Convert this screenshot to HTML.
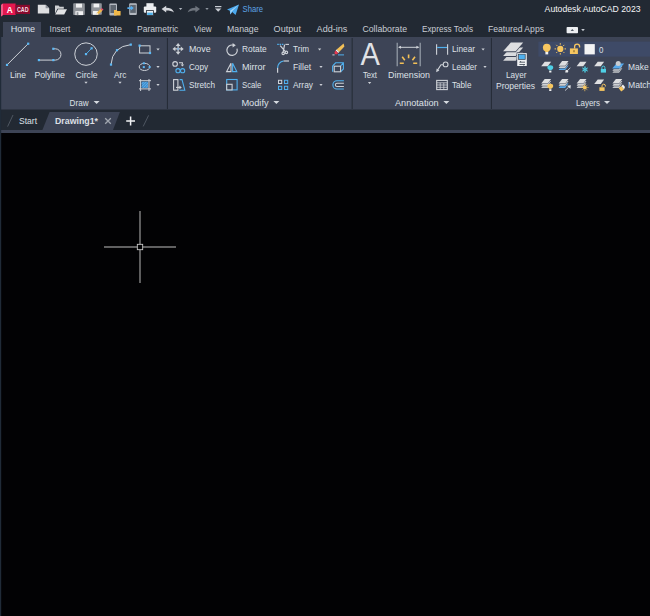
<!DOCTYPE html>
<html><head><meta charset="utf-8"><title>Autodesk AutoCAD 2023</title>
<style>
html,body{margin:0;padding:0;background:#000;overflow:hidden}
body{width:650px;height:616px;position:relative}
svg{position:absolute;left:0;top:0;display:block}
text{font-family:"Liberation Sans",sans-serif;font-size:9.5px;fill:#dde0e6}
.b{font-weight:bold}
</style></head><body>
<svg width="650" height="616" viewBox="0 0 650 616">
<!-- backgrounds -->
<rect x="0" y="0" width="650" height="616" fill="#020204"/>
<rect x="0" y="0" width="650" height="37" fill="#222933"/>
<rect x="0" y="100" width="650" height="30" fill="#222933"/>
<rect x="0" y="37" width="650" height="72.5" fill="#3d4456"/>
<rect x="0" y="130" width="650" height="3" fill="#3d4456"/>
<rect x="0" y="37" width="1.2" height="579" fill="#202b38"/>
<!-- home tab -->
<rect x="3" y="22" width="38" height="16" fill="#3d4456"/>
<!-- panel separators -->
<g fill="#252c37">
<rect x="166.9" y="38" width="1.05" height="71"/>
<rect x="351.5" y="38" width="1.4" height="71" fill="#2b323e"/>
<rect x="490.9" y="38" width="1.05" height="71"/>
</g>
<!-- drawing tab -->
<polygon points="49.6,112 119.9,112 113,130 42.4,130" fill="#3d4456"/>
<!-- layer combo -->
<rect x="538.4" y="41.6" width="112" height="15" fill="#3e4a67"/>
<!-- crosshair -->
<g stroke="#808080" stroke-width="1.45" fill="none">
<line x1="104" y1="247" x2="176" y2="247"/>
<line x1="140" y1="211" x2="140" y2="283"/>
</g>
<rect x="137.3" y="244.3" width="5.4" height="5.4" fill="#020204" stroke="#d0d0d0" stroke-width="0.85"/>
<!-- logo -->
<polygon points="1,5 3,3.6 15.6,3.6 15.6,15 3,15 1,16.4" fill="#e3174f"/>
<polygon points="1,5 3,3.6 3,15 1,16.4" fill="#ef5d86"/>
<rect x="15.6" y="4.8" width="14.4" height="9.2" fill="#870a2d"/>
<text x="6.8" y="12.7" textLength="6" lengthAdjust="spacingAndGlyphs" style="font-size:9px;font-weight:bold;fill:#fff">A</text>
<text x="17" y="12.1" textLength="11.6" lengthAdjust="spacingAndGlyphs" style="font-size:6.3px;font-weight:bold;fill:#f3dfe4">CAD</text>
<!-- QAT: new -->
<path d="M37.8,4.8 h7.8 l3.6,3.4 v5.4 h-11.4 z" fill="#dddee0"/>
<path d="M45.6,4.8 l3.6,3.4 h-3.6z" fill="#8e939b"/>
<!-- open -->
<path d="M55,5.4 h3.6 l1,1.4 h4.2 v2 h-6.4 l-2.4,5z" fill="#cfd1d4"/>
<path d="M58,9.2 h9 l-2.8,5.3 h-9z" fill="#e2e3e5"/>
<!-- save -->
<g>
<rect x="73.2" y="3.2" width="11.6" height="11.9" rx="0.8" fill="#90949a"/>
<rect x="76" y="3.7" width="6" height="3.9" fill="#f0f1f2"/>
<rect x="75.4" y="11.2" width="7.6" height="3.9" fill="#f0f1f2"/>
<rect x="76.6" y="12.2" width="1.8" height="2.9" fill="#90949a"/>
</g>
<!-- save as -->
<g>
<rect x="91.2" y="3.2" width="10.6" height="11.6" rx="0.8" fill="#90949a"/>
<rect x="93.6" y="3.7" width="5.6" height="3.7" fill="#f0f1f2"/>
<rect x="93" y="11" width="5" height="3.8" fill="#f0f1f2"/>
<path d="M96.2,15 l0.8,-2.4 l3.6,-3.6 l1.8,1.7 l-3.7,3.6z" fill="#f0b84a"/>
<path d="M100.6,9 l1.1,-1.1 l1.8,1.7 l-1.1,1.1z" fill="#e8506a"/>
<path d="M96.2,15 l0.8,-2.4 l1.7,1.7z" fill="#e9e9e9"/>
</g>
<!-- mobile open -->
<g>
<rect x="109.4" y="3.4" width="7.6" height="12" rx="1" fill="#b4b9c1"/>
<rect x="110.4" y="5" width="5.6" height="8" fill="#5e6670"/>
<path d="M114,10 h2.6 l0.8,1 h3.2 v4.4 h-6.6z" fill="#f0b84a"/>
</g>
<!-- mobile save -->
<g>
<rect x="129.2" y="3.3" width="7.6" height="11.8" rx="1" fill="#b4b9c1"/>
<rect x="130.2" y="4.9" width="5.6" height="8" fill="#5e6670"/>
<path d="M127.4,7.3 h3.4 v-1.6 l3,2.4 l-3,2.4 v-1.6 h-3.4z" fill="#55aef0"/>
</g>
<!-- print -->
<g>
<rect x="146.4" y="3.2" width="7.2" height="4" fill="#eceef1"/>
<rect x="143.8" y="6.6" width="12.4" height="6.2" rx="1" fill="#eceef1"/>
<rect x="146.4" y="10.6" width="7.2" height="5" fill="#eceef1" stroke="#222933" stroke-width="0.8"/>
<rect x="147.2" y="12.6" width="5.6" height="2.4" fill="#4fb0e8"/>
</g>
<!-- undo -->
<path d="M161.6,9 l4.6,-3.2 v2 c4,0 6.6,1.4 7.8,4.6 c-2,-1.6 -4.4,-2 -7.8,-2 v2z" fill="#d4d7dc"/>
<!-- redo -->
<path d="M200,9 l-4.6,-3.2 v2 c-4,0 -6.6,1.4 -7.8,4.6 c2,-1.6 4.4,-2 7.8,-2 v2z" fill="#6e747d"/>
<!-- customize -->
<rect x="215" y="6" width="6.4" height="1.2" fill="#c9cdd4"/>
<polygon points="215,8.4 221.4,8.4 218.2,11.8" fill="#c9cdd4"/>
<!-- share plane -->
<path d="M227,9.4 l12,-5 l-3.4,10.6 l-3.4,-3 l-2,2.4 l-0.4,-3.6z" fill="#4aa8ee"/>
<path d="M239,4.4 l-8.8,6.4 l0.4,3.6 l1.2,-3z" fill="#a6d6f8"/>
<!-- workspace switch -->
<rect x="566.6" y="27" width="11.4" height="6.2" rx="0.8" fill="#eceef1"/>
<polygon points="570.6,31 574,31 572.3,29" fill="#555d68"/>
<g fill="none" stroke="#ced2d8" stroke-width="1">
<line x1="7" y1="64.9" x2="28.2" y2="43.7"/>
<path d="M38.8,60.1 H55.3 A5.65,5.65 0 0 0 55.3,48.8 H53.3"/>
<circle cx="86" cy="54.1" r="11.25"/>
<path d="M111,64.6 Q112.2,46.6 131,44.6"/>
<rect x="139.6" y="45.8" width="10.4" height="7.2"/>
<ellipse cx="144.5" cy="66.9" rx="5.3" ry="3.6"/>
<path d="M140.6,79 V91 M149,79 V91 M139,80.7 H151 M139,88.9 H151"/>
</g>
<line x1="86" y1="54.1" x2="91.6" y2="48.3" stroke="#4fb0ee" stroke-width="0.9"/>
<rect x="5.90" y="63.80" width="2.2" height="2.2" fill="#5cb9f6"/>
<rect x="27.10" y="42.60" width="2.2" height="2.2" fill="#5cb9f6"/>
<rect x="37.80" y="59.00" width="2.2" height="2.2" fill="#5cb9f6"/>
<rect x="52.20" y="59.00" width="2.2" height="2.2" fill="#5cb9f6"/>
<rect x="52.20" y="47.70" width="2.2" height="2.2" fill="#5cb9f6"/>
<rect x="84.90" y="53.00" width="2.2" height="2.2" fill="#5cb9f6"/>
<rect x="90.50" y="47.20" width="2.2" height="2.2" fill="#5cb9f6"/>
<rect x="109.90" y="63.50" width="2.2" height="2.2" fill="#5cb9f6"/>
<rect x="115.90" y="49.10" width="2.2" height="2.2" fill="#5cb9f6"/>
<rect x="129.70" y="43.50" width="2.2" height="2.2" fill="#5cb9f6"/>
<rect x="138.50" y="44.50" width="2.2" height="2.2" fill="#5cb9f6"/>
<rect x="148.90" y="51.90" width="2.2" height="2.2" fill="#5cb9f6"/>
<rect x="142.80" y="66.10" width="2" height="2" fill="#5cb9f6"/>
<rect x="148.60" y="66.10" width="2" height="2" fill="#5cb9f6"/>
<rect x="142.80" y="62.30" width="2" height="2" fill="#5cb9f6"/>
<rect x="141.6" y="81.7" width="6.4" height="6.2" fill="#3f8fd0"/>
<path d="M141.6,84 l2.3,-2.3 M141.6,86.6 l4.9,-4.9 M143,87.9 l5,-5 M145.6,87.9 l2.4,-2.4" stroke="#79c3f5" stroke-width="0.6" fill="none"/>
<path d="M174.6,48.9 H181.6 M178.1,45.4 V52.4" stroke="#ced2d8" stroke-width="1.2" fill="none"/>
<g fill="#ced2d8"><polygon points="178.1,43.1 180.5,46.1 175.7,46.1"/><polygon points="178.1,54.7 180.5,51.7 175.7,51.7"/><polygon points="172.5,48.9 175.4,46.6 175.4,51.2"/><polygon points="183.7,48.9 180.8,46.6 180.8,51.2"/></g>
<rect x="177.3" y="48.1" width="1.6" height="1.6" fill="#6fa8dc"/>
<g fill="none" stroke="#ced2d8" stroke-width="1.1"><circle cx="175.1" cy="63.9" r="2.3"/><path d="M179,62.8 H182.4 V64.6"/></g>
<polygon points="180.6,64.4 184.2,64.4 182.4,66.6" fill="#ced2d8"/>
<g fill="none" stroke="#4fb0ee" stroke-width="1.1"><circle cx="178" cy="70.7" r="2.1"/><circle cx="182.6" cy="70.7" r="2.1"/></g>
<rect x="173.6" y="79.6" width="4.3" height="10.6" fill="none" stroke="#ced2d8" stroke-width="1.1"/>
<path d="M179.6,79.6 H182 L184.8,90.2 H179.4" fill="none" stroke="#4fb0ee" stroke-width="1.1"/>
<path d="M176,87.4 H180" stroke="#ced2d8" stroke-width="1.1" fill="none"/><polygon points="179.4,85.6 181.8,87.4 179.4,89.2" fill="#ced2d8"/>
<path d="M233.4,45.2 A5.2,5.2 0 1 0 237,48.6" fill="none" stroke="#ced2d8" stroke-width="1.2"/>
<polygon points="232.6,43 235.8,45.2 232.6,47.4" fill="#ced2d8"/>
<polygon points="226.6,71.6 231,71.6 231,63.2" fill="none" stroke="#ced2d8" stroke-width="1.1"/>
<polygon points="232.6,63.2 232.6,71.6 236.8,71.6" fill="none" stroke="#4fb0ee" stroke-width="1.1"/>
<rect x="226.7" y="79.5" width="10.4" height="10.4" fill="none" stroke="#4fb0ee" stroke-width="1.1"/>
<rect x="226.7" y="84.3" width="5.4" height="5.6" fill="#3d4456" stroke="#ced2d8" stroke-width="1.1"/>
<path d="M277.2,44.4 H283.4" stroke="#4fb0ee" stroke-width="1.1" stroke-dasharray="1.6,0.8" fill="none"/>
<path d="M285.4,44.4 H289" stroke="#ced2d8" stroke-width="1.1" fill="none"/>
<g fill="none" stroke="#ced2d8" stroke-width="1.2"><path d="M280.2,45.6 L285.4,51.6 M284.6,44.6 L283.2,52"/><circle cx="283.2" cy="53.4" r="1.2"/><circle cx="286.4" cy="52.4" r="1.2"/></g>
<path d="M277.6,72.8 V68" stroke="#ced2d8" stroke-width="1.2" fill="none"/>
<path d="M277.6,68 A6.8,6.8 0 0 1 283.6,61" stroke="#4fb0ee" stroke-width="1.2" fill="none"/>
<path d="M283.6,61 H289" stroke="#ced2d8" stroke-width="1.2" fill="none"/>
<rect x="278.5" y="80.3" width="3.2" height="3.2" fill="none" stroke="#ced2d8" stroke-width="1"/>
<rect x="284.5" y="80.3" width="3.2" height="3.2" fill="none" stroke="#4fb0ee" stroke-width="1"/>
<rect x="278.5" y="86.3" width="3.2" height="3.2" fill="none" stroke="#4fb0ee" stroke-width="1"/>
<rect x="284.5" y="86.3" width="3.2" height="3.2" fill="none" stroke="#4fb0ee" stroke-width="1"/>
<path d="M343.6,43.4 L344.4,46.6 L339.2,52 L336.6,49.6 Z" fill="#f3c057"/>
<path d="M336.6,49.6 L339.2,52 L338.2,53 L335.6,50.6 Z" fill="#f1f1f1"/>
<path d="M335.6,50.6 L338.2,53 L337,54.2 Q335.4,54.6 334.6,53.4 Q334,52.2 335.6,50.6 Z" fill="#e8384f"/>
<path d="M332.4,54.9 H334.6" stroke="#ced2d8" stroke-width="1" fill="none"/><path d="M338,54.9 H344" stroke="#4fb0ee" stroke-width="1" fill="none"/>
<path d="M332.6,66 L335.6,62.8 H343.4 V69 L340.6,71.8 M340.6,66 L343.4,62.8 M332.6,66 V71.8" fill="none" stroke="#4fb0ee" stroke-width="1.1"/>
<rect x="334.2" y="66.2" width="6.4" height="5.6" fill="none" stroke="#ced2d8" stroke-width="1.1"/>
<path d="M343.9,80.8 H337 A4.1,4.1 0 0 0 337,89 H343.9" fill="none" stroke="#4fb0ee" stroke-width="1.1"/>
<path d="M343.9,83.3 H337 A1.6,1.6 0 0 0 337,86.5 H343.9" fill="none" stroke="#ced2d8" stroke-width="1.1"/>
<g opacity="0.97"><text x="360.6" y="64.8" textLength="19.4" lengthAdjust="spacingAndGlyphs" style="font-size:30.8px;fill:#e6e8eb">A</text></g>
<path d="M397.2,42.8 V66.2 M420.2,42.8 V66.2" stroke="#98a0aa" stroke-width="1.2" fill="none"/>
<path d="M399,47.3 H418.4" stroke="#ced2d8" stroke-width="1" fill="none"/><polygon points="398,47.3 401,45.8 401,48.8" fill="#ced2d8"/><polygon points="419.4,47.3 416.4,45.8 416.4,48.8" fill="#ced2d8"/>
<path d="M408.6,54.4 V58.2 M402.2,56.8 L404.8,60.2 M415,56.8 L412.4,60.2 M399.8,63.3 H403.8 M413.2,63.3 H417.2" stroke="#f3c057" stroke-width="1.6" fill="none"/>
<path d="M436.6,44.2 V54.8 M447.6,44.2 V54.8" stroke="#ced2d8" stroke-width="1.1" fill="none"/>
<path d="M437.2,47.5 H447" stroke="#4fb0ee" stroke-width="1.2" fill="none"/>
<g fill="none" stroke="#ced2d8" stroke-width="1.1"><circle cx="445.6" cy="64.4" r="2.4"/><path d="M443.2,64.8 H441 L437.4,70.4"/></g>
<polygon points="436.2,72.2 436.6,68.6 439.4,70.6" fill="#ced2d8"/>
<rect x="436.7" y="80.4" width="10.6" height="9.2" fill="none" stroke="#ced2d8" stroke-width="1.1"/>
<path d="M436.7,82.8 H447.3 M436.7,85 H447.3 M436.7,87.3 H447.3 M440.2,82.8 V89.6 M443.8,82.8 V89.6" stroke="#ced2d8" stroke-width="0.8" fill="none"/>
<polygon points="503.1,60.8 510.8,52.199999999999996 523.2,52.199999999999996 515.7,60.8" fill="#d3d5d8"/>
<polygon points="503.1,57.0 510.8,48.4 523.2,48.4 515.7,57.0" fill="#3d4456"/>
<polygon points="503.1,56.0 510.8,47.4 523.2,47.4 515.7,56.0" fill="#d9dbde"/>
<polygon points="503.1,52.2 510.8,43.6 523.2,43.6 515.7,52.2" fill="#3d4456"/>
<polygon points="503.1,51.2 510.8,42.6 523.2,42.6 515.7,51.2" fill="#dedfe1"/>
<rect x="516.6" y="52.3" width="10.6" height="14.2" fill="#3d4456"/>
<rect x="517.2" y="52.9" width="9.6" height="13.2" rx="0.6" fill="#eef0f2"/>
<rect x="518.4" y="54.2" width="6.8" height="5.2" fill="#4fb0ee" stroke="#39424f" stroke-width="0.7"/>
<path d="M519.4,62.2 H525 M519.4,64.5 H525 M520.6,61 V62.2 M523.8,64.5 V65.6" stroke="#39424f" stroke-width="0.8" fill="none"/>
<circle cx="546.8" cy="47.6" r="3.9" fill="#f6c660"/><rect x="545.2" y="50.6" width="3.2" height="1.4" fill="#f6c660"/><rect x="545.4" y="52" width="2.8" height="2.4" fill="#f1f1f1"/>
<circle cx="560.3" cy="48.9" r="3.1" fill="#f6c660"/>
<path d="M564.50,48.90 L566.00,48.90 M563.27,51.87 L564.33,52.93 M560.30,53.10 L560.30,54.60 M557.33,51.87 L556.27,52.93 M556.10,48.90 L554.60,48.90 M557.33,45.93 L556.27,44.87 M560.30,44.70 L560.30,43.20 M563.27,45.93 L564.33,44.87" stroke="#f6c660" stroke-width="1" fill="none"/>
<rect x="569.9" y="48.4" width="8" height="5.6" fill="#f6c660"/><path d="M574.6,48.4 V46.6 A2.5,2.5 0 0 1 579.6,46.6 V47.4" fill="none" stroke="#f6c660" stroke-width="1.3"/><rect x="573.4" y="50.2" width="1.2" height="2" fill="#8a6a2a"/>
<rect x="584.5" y="44.1" width="10.3" height="10.3" fill="#f2f3f4"/>
<polygon points="541.20,66.30 544.70,61.70 551.10,61.70 547.80,66.30" fill="#dedfe1"/>
<ellipse cx="550.3" cy="67.5" rx="2.9" ry="2.35" fill="#4fd0e6"/><rect x="549.0999999999999" y="69.1" width="2.4" height="1.2" fill="#4fd0e6"/><rect x="549.1999999999999" y="70.7" width="2.2" height="1.8" fill="#f1f1f1"/>
<polygon points="558.60,70.10 562.10,65.50 568.50,65.50 565.20,70.10" fill="#58aaec"/><polygon points="558.60,68.50 562.10,63.90 568.50,63.90 565.20,68.50" fill="#3d4456"/><polygon points="558.60,67.90 562.10,63.30 568.50,63.30 565.20,67.90" fill="#cfd1d4"/><polygon points="558.60,66.30 562.10,61.70 568.50,61.70 565.20,66.30" fill="#3d4456"/><polygon points="558.60,65.70 562.10,61.10 568.50,61.10 565.20,65.70" fill="#dedfe1"/>
<path d="M570.4,67.8 L567.4,70.6" stroke="#ced2d8" stroke-width="0.9" fill="none"/><path d="M565.2,72.6 L565.6,70.2 L567.2,69.8 L568.4,71 L567.8,72.4 Z" fill="#e6e8ea"/>
<polygon points="576.60,66.30 580.10,61.70 586.50,61.70 583.20,66.30" fill="#dedfe1"/>
<path d="M585.00,66.20 L585.00,72.80 M587.86,67.85 L582.14,71.15 M587.86,71.15 L582.14,67.85" stroke="#4fd0e6" stroke-width="0.9" fill="none"/><circle cx="585" cy="69.5" r="1.7" fill="none" stroke="#4fd0e6" stroke-width="0.8"/>
<polygon points="594.20,66.30 597.70,61.70 604.10,61.70 600.80,66.30" fill="#dedfe1"/>
<rect x="600.8" y="69" width="5.2" height="3.6" fill="#4fd0e6"/><path d="M601.9,69 V67.6 A1.5,1.5 0 0 1 604.9,67.6 V69" fill="none" stroke="#4fd0e6" stroke-width="1"/>
<polygon points="612.40,72.80 615.90,68.20 622.30,68.20 619.00,72.80" fill="#c2c5c9"/>
<polygon points="612.40,71.30 615.90,66.70 622.30,66.70 619.00,71.30" fill="#3d4456"/>
<polygon points="612.40,70.70 615.90,66.10 622.30,66.10 619.00,70.70" fill="#cfd1d4"/>
<polygon points="612.40,69.20 615.90,64.60 622.30,64.60 619.00,69.20" fill="#3d4456"/>
<polygon points="612.2,68.6 616.4,63.6 624.2,63.6 619.8,68.6" fill="#58aaec"/>
<circle cx="618.2" cy="63.6" r="2.5" fill="#c9ccd0"/>
<polygon points="541.20,87.90 544.70,83.30 551.10,83.30 547.80,87.90" fill="#c2c5c9"/><polygon points="541.20,86.30 544.70,81.70 551.10,81.70 547.80,86.30" fill="#3d4456"/><polygon points="541.20,85.70 544.70,81.10 551.10,81.10 547.80,85.70" fill="#cfd1d4"/><polygon points="541.20,84.10 544.70,79.50 551.10,79.50 547.80,84.10" fill="#3d4456"/><polygon points="541.20,83.50 544.70,78.90 551.10,78.90 547.80,83.50" fill="#dedfe1"/>
<ellipse cx="550.3" cy="86" rx="2.9" ry="2.35" fill="#f6c660"/><rect x="549.0999999999999" y="87.6" width="2.4" height="1.2" fill="#f6c660"/><rect x="549.1999999999999" y="89.2" width="2.2" height="1.8" fill="#f1f1f1"/>
<polygon points="558.60,87.90 562.10,83.30 568.50,83.30 565.20,87.90" fill="#58aaec"/><polygon points="558.60,86.30 562.10,81.70 568.50,81.70 565.20,86.30" fill="#3d4456"/><polygon points="558.60,85.70 562.10,81.10 568.50,81.10 565.20,85.70" fill="#cfd1d4"/><polygon points="558.60,84.10 562.10,79.50 568.50,79.50 565.20,84.10" fill="#3d4456"/><polygon points="558.60,83.50 562.10,78.90 568.50,78.90 565.20,83.50" fill="#dedfe1"/>
<path d="M565,90.6 L568.6,87.2" stroke="#ced2d8" stroke-width="0.9" fill="none"/><polygon points="570.8,85.2 570.4,88.8 567,85.8" fill="#e6e8ea"/>
<polygon points="576.60,87.90 580.10,83.30 586.50,83.30 583.20,87.90" fill="#c2c5c9"/><polygon points="576.60,86.30 580.10,81.70 586.50,81.70 583.20,86.30" fill="#3d4456"/><polygon points="576.60,85.70 580.10,81.10 586.50,81.10 583.20,85.70" fill="#cfd1d4"/><polygon points="576.60,84.10 580.10,79.50 586.50,79.50 583.20,84.10" fill="#3d4456"/><polygon points="576.60,83.50 580.10,78.90 586.50,78.90 583.20,83.50" fill="#dedfe1"/>
<circle cx="584.8" cy="87.5" r="2" fill="#f6c660"/><path d="M587.40,87.50 L588.50,87.50 M586.64,89.34 L587.42,90.12 M584.80,90.10 L584.80,91.20 M582.96,89.34 L582.18,90.12 M582.20,87.50 L581.10,87.50 M582.96,85.66 L582.18,84.88 M584.80,84.90 L584.80,83.80 M586.64,85.66 L587.42,84.88" stroke="#f6c660" stroke-width="0.8" fill="none"/>
<polygon points="594.20,84.00 597.70,79.40 604.10,79.40 600.80,84.00" fill="#dedfe1"/>
<rect x="599.4" y="87.3" width="5.2" height="3.6" fill="#f6c660"/><path d="M602.0,87.3 V85.89999999999999 A1.7,1.7 0 0 1 605.4,85.89999999999999 V86.5" fill="none" stroke="#f6c660" stroke-width="1"/>
<polygon points="612.40,87.90 615.90,83.30 622.30,83.30 619.00,87.90" fill="#c2c5c9"/><polygon points="612.40,86.30 615.90,81.70 622.30,81.70 619.00,86.30" fill="#3d4456"/><polygon points="612.40,85.70 615.90,81.10 622.30,81.10 619.00,85.70" fill="#cfd1d4"/><polygon points="612.40,84.10 615.90,79.50 622.30,79.50 619.00,84.10" fill="#3d4456"/><polygon points="612.40,83.50 615.90,78.90 622.30,78.90 619.00,83.50" fill="#dedfe1"/>
<path d="M618.6,88 L621.4,86 L624,89.4 L621.2,91.4 Z" fill="#f6c660"/><path d="M621.4,86 l1.6,-1.6 l2,2.6 l-1,2.4z" fill="#f1f1f1"/>
<path d="M13,115 L7.6,126.6 M148.6,115.4 L143.2,126.4" stroke="#545b67" stroke-width="0.9" fill="none"/>
<path d="M105.2,118.2 L110.8,123.8 M110.8,118.2 L105.2,123.8" stroke="#a0a6af" stroke-width="1.3" fill="none"/>
<path d="M126.2,121 H135 M130.6,116.6 V125.4" stroke="#f2f3f5" stroke-width="1.5" fill="none"/>
<g>
<polygon points="156.35,48.6 159.65,48.6 158,50.6" fill="#cdd1d7"/>
<polygon points="156.35,66.0 159.65,66.0 158,68.0" fill="#cdd1d7"/>
<polygon points="156.35,84.0 159.65,84.0 158,86.0" fill="#cdd1d7"/>
<polygon points="317.95000000000005,48.6 321.25,48.6 319.6,50.6" fill="#cdd1d7"/>
<polygon points="319.35,66.0 322.65,66.0 321,68.0" fill="#cdd1d7"/>
<polygon points="319.35,84.0 322.65,84.0 321,86.0" fill="#cdd1d7"/>
<polygon points="481.45000000000005,48.6 484.75,48.6 483.1,50.6" fill="#cdd1d7"/>
<polygon points="483.35,66.0 486.65,66.0 485,68.0" fill="#cdd1d7"/>
<polygon points="84.35,81.8 87.65,81.8 86,83.8" fill="#cdd1d7"/>
<polygon points="118.35,81.8 121.65,81.8 120,83.8" fill="#cdd1d7"/>
<polygon points="367.95000000000005,82.0 371.25,82.0 369.6,84.0" fill="#cdd1d7"/>
<polygon points="93.6,101.1 99.6,101.1 96.6,104.1" fill="#d6dae0"/>
<polygon points="273.4,101.0 279.4,101.0 276.4,104.0" fill="#d6dae0"/>
<polygon points="443.4,101.0 449.4,101.0 446.4,104.0" fill="#d6dae0"/>
<polygon points="604.0,101.0 610.0,101.0 607,104.0" fill="#d6dae0"/>
<polygon points="178.9,8.0 182.29999999999998,8.0 180.6,10.0" fill="#aeb4bd"/>
<polygon points="205.3,8.0 208.7,8.0 207,10.0" fill="#8d949e"/>
<polygon points="581.2,29.099999999999998 584.8,29.099999999999998 583,31.3" fill="#c4c9d1"/>
</g>
<g>
<text x="10.8" y="32.3" textLength="24.2" lengthAdjust="spacingAndGlyphs">Home</text>
<text x="49.6" y="32.3" textLength="20.8" lengthAdjust="spacingAndGlyphs" style="fill:#c9cdd4">Insert</text>
<text x="86" y="32.3" textLength="36" lengthAdjust="spacingAndGlyphs" style="fill:#c9cdd4">Annotate</text>
<text x="137" y="32.3" textLength="41.4" lengthAdjust="spacingAndGlyphs" style="fill:#c9cdd4">Parametric</text>
<text x="194" y="32.3" textLength="17.6" lengthAdjust="spacingAndGlyphs" style="fill:#c9cdd4">View</text>
<text x="227" y="32.3" textLength="31.6" lengthAdjust="spacingAndGlyphs" style="fill:#c9cdd4">Manage</text>
<text x="273.6" y="32.3" textLength="27.4" lengthAdjust="spacingAndGlyphs" style="fill:#c9cdd4">Output</text>
<text x="316.6" y="32.3" textLength="30.8" lengthAdjust="spacingAndGlyphs" style="fill:#c9cdd4">Add-ins</text>
<text x="362.4" y="32.3" textLength="44.6" lengthAdjust="spacingAndGlyphs" style="fill:#c9cdd4">Collaborate</text>
<text x="422" y="32.3" textLength="51" lengthAdjust="spacingAndGlyphs" style="fill:#c9cdd4">Express Tools</text>
<text x="488" y="32.3" textLength="56" lengthAdjust="spacingAndGlyphs" style="fill:#c9cdd4">Featured Apps</text>
<text x="544.6" y="11.6" textLength="96" lengthAdjust="spacingAndGlyphs" style="fill:#f4f5f7">Autodesk AutoCAD 2023</text>
<text x="242.6" y="12.2" textLength="20.4" lengthAdjust="spacingAndGlyphs" style="fill:#5ea4e6">Share</text>
<text x="10" y="77.5" textLength="16" lengthAdjust="spacingAndGlyphs">Line</text>
<text x="34.4" y="77.5" textLength="30.6" lengthAdjust="spacingAndGlyphs">Polyline</text>
<text x="75.6" y="77.5" textLength="22" lengthAdjust="spacingAndGlyphs">Circle</text>
<text x="114" y="77.5" textLength="12.4" lengthAdjust="spacingAndGlyphs">Arc</text>
<text x="69.6" y="105.6" textLength="19" lengthAdjust="spacingAndGlyphs">Draw</text>
<text x="189" y="52.3" textLength="21.6" lengthAdjust="spacingAndGlyphs">Move</text>
<text x="189" y="70.0" textLength="19" lengthAdjust="spacingAndGlyphs">Copy</text>
<text x="189" y="88.0" textLength="26" lengthAdjust="spacingAndGlyphs">Stretch</text>
<text x="242" y="52.3" textLength="24.6" lengthAdjust="spacingAndGlyphs">Rotate</text>
<text x="242" y="70.0" textLength="23.6" lengthAdjust="spacingAndGlyphs">Mirror</text>
<text x="242" y="88.0" textLength="19.4" lengthAdjust="spacingAndGlyphs">Scale</text>
<text x="293" y="52.3" textLength="16" lengthAdjust="spacingAndGlyphs">Trim</text>
<text x="293" y="70.0" textLength="18" lengthAdjust="spacingAndGlyphs">Fillet</text>
<text x="293" y="88.0" textLength="20" lengthAdjust="spacingAndGlyphs">Array</text>
<text x="241.4" y="105.6" textLength="27.2" lengthAdjust="spacingAndGlyphs">Modify</text>
<text x="363" y="77.5" textLength="14" lengthAdjust="spacingAndGlyphs">Text</text>
<text x="388" y="77.5" textLength="42" lengthAdjust="spacingAndGlyphs">Dimension</text>
<text x="452" y="52.3" textLength="23" lengthAdjust="spacingAndGlyphs">Linear</text>
<text x="452" y="70.0" textLength="25" lengthAdjust="spacingAndGlyphs">Leader</text>
<text x="452" y="88.0" textLength="19.4" lengthAdjust="spacingAndGlyphs">Table</text>
<text x="395" y="105.6" textLength="43.6" lengthAdjust="spacingAndGlyphs">Annotation</text>
<text x="506" y="77.5" textLength="20.4" lengthAdjust="spacingAndGlyphs">Layer</text>
<text x="496" y="88.7" textLength="39" lengthAdjust="spacingAndGlyphs">Properties</text>
<text x="599" y="52.5" textLength="4.4" lengthAdjust="spacingAndGlyphs">0</text>
<text x="628" y="69.9" textLength="20.6" lengthAdjust="spacingAndGlyphs">Make</text>
<text x="628" y="88.0" textLength="23.4" lengthAdjust="spacingAndGlyphs">Match</text>
<text x="576" y="105.6" textLength="24" lengthAdjust="spacingAndGlyphs">Layers</text>
<text x="19" y="124.0" textLength="18" lengthAdjust="spacingAndGlyphs">Start</text>
<text x="55" y="123.7" textLength="43" lengthAdjust="spacingAndGlyphs" class="b">Drawing1*</text>
</g>
</svg>
</body></html>
